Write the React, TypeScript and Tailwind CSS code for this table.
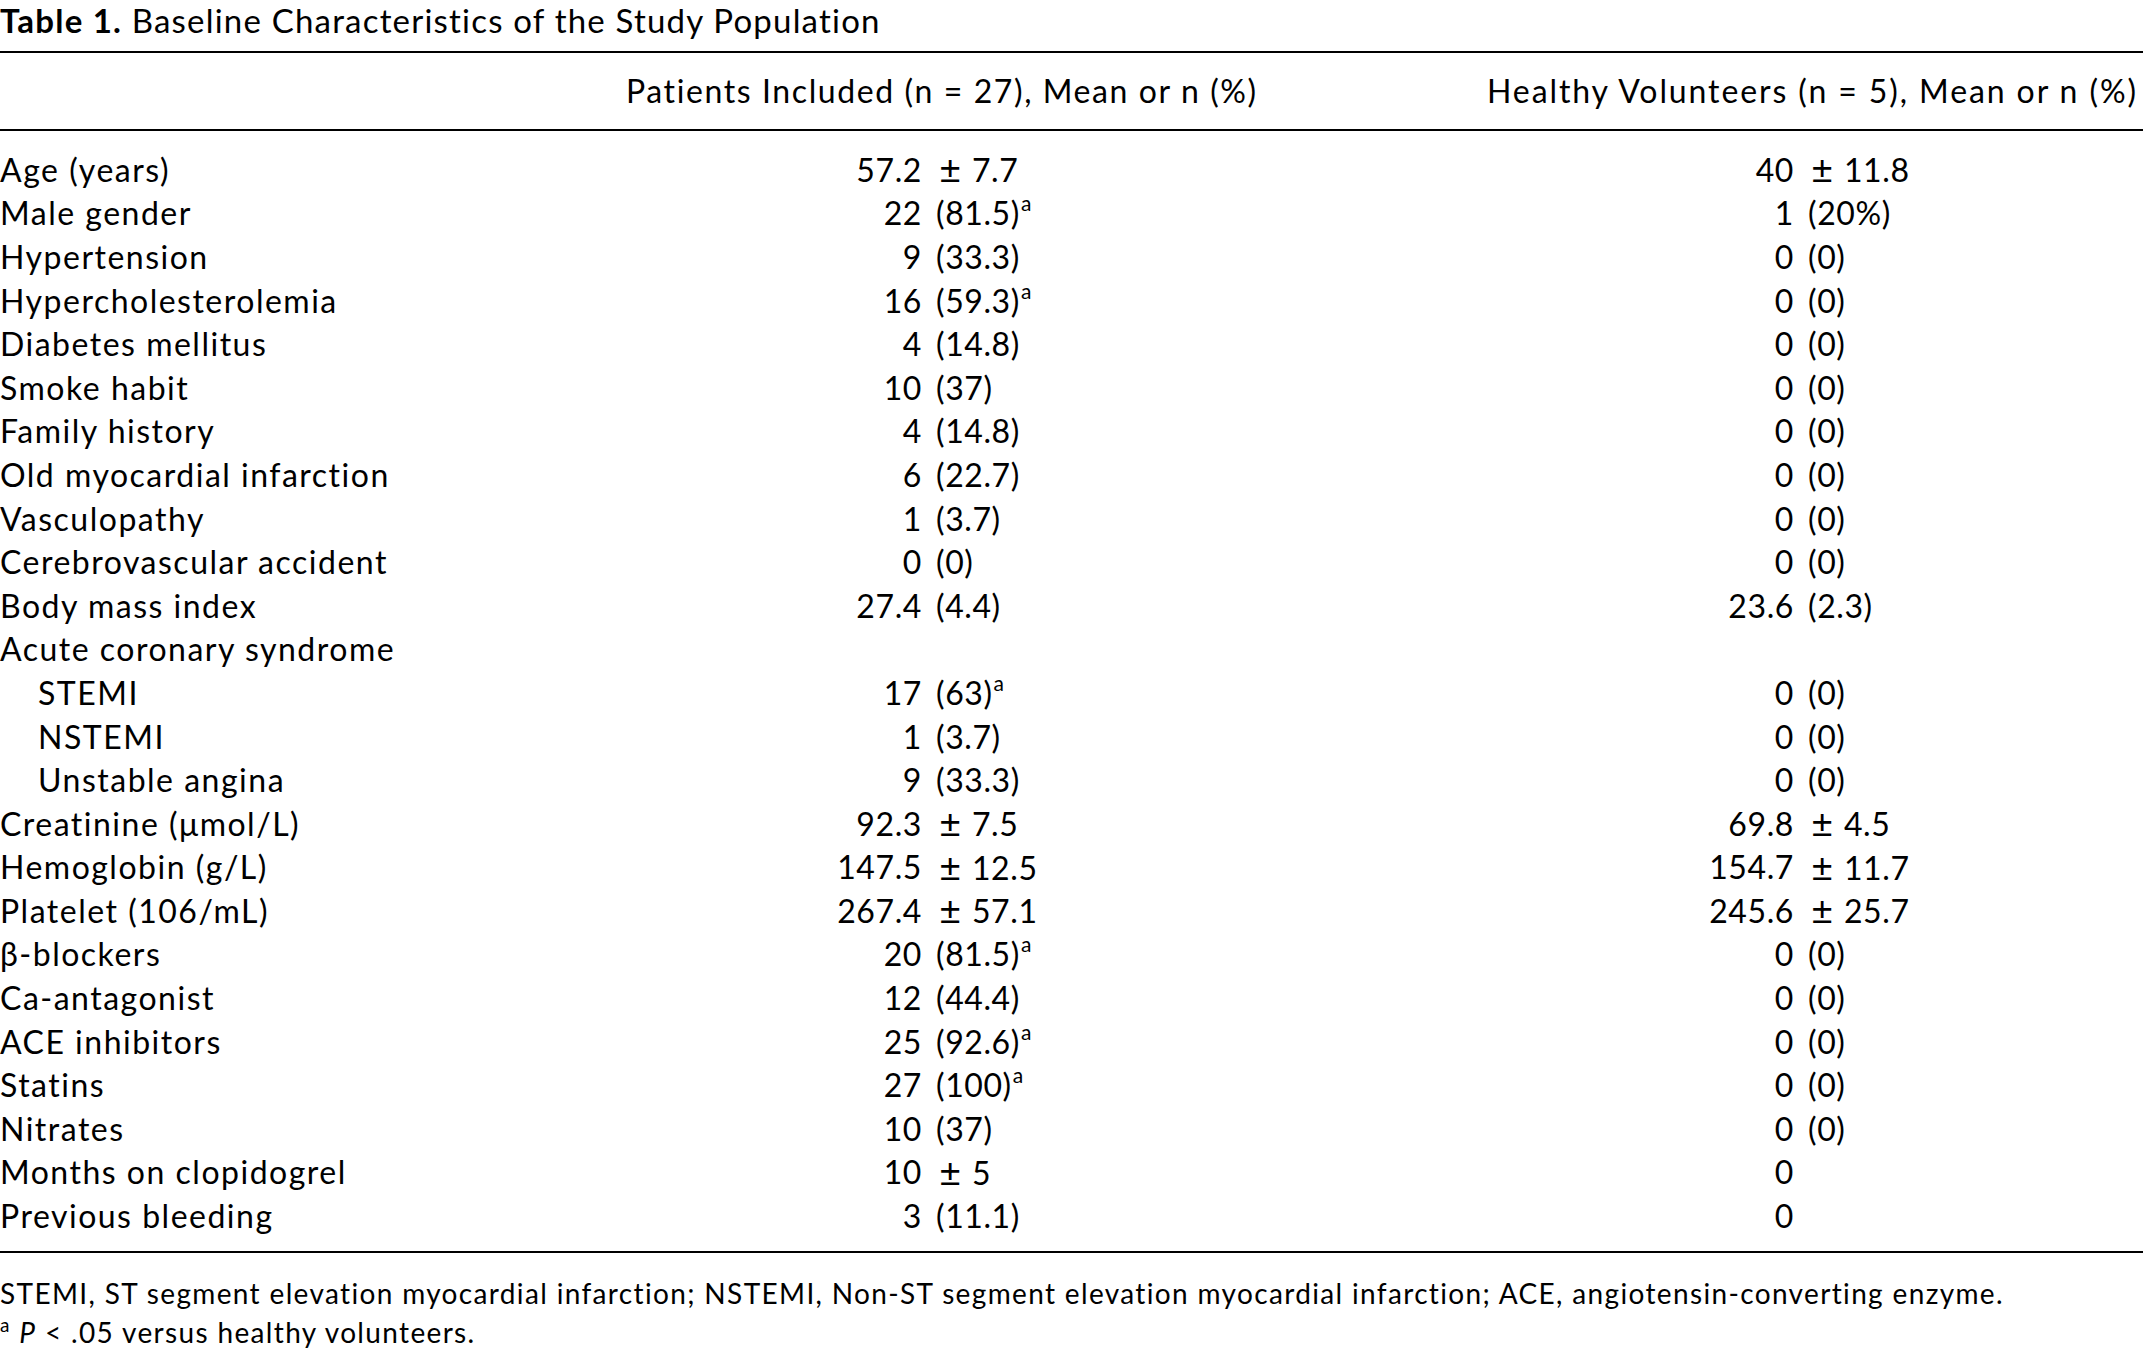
type Cell = { a: string; b?: string; pm?: boolean; sup?: boolean };
type Row = { label: string; indent?: boolean; p?: Cell; h?: Cell };

const zero: Cell = { a: '0', b: '(0)' };

const rows: Row[] = [
  { label: 'Age (years)', p: { a: '57.2', b: '7.7', pm: true }, h: { a: '40', b: '11.8', pm: true } },
  { label: 'Male gender', p: { a: '22', b: '(81.5)', sup: true }, h: { a: '1', b: '(20%)' } },
  { label: 'Hypertension', p: { a: '9', b: '(33.3)' }, h: zero },
  { label: 'Hypercholesterolemia', p: { a: '16', b: '(59.3)', sup: true }, h: zero },
  { label: 'Diabetes mellitus', p: { a: '4', b: '(14.8)' }, h: zero },
  { label: 'Smoke habit', p: { a: '10', b: '(37)' }, h: zero },
  { label: 'Family history', p: { a: '4', b: '(14.8)' }, h: zero },
  { label: 'Old myocardial infarction', p: { a: '6', b: '(22.7)' }, h: zero },
  { label: 'Vasculopathy', p: { a: '1', b: '(3.7)' }, h: zero },
  { label: 'Cerebrovascular accident', p: { a: '0', b: '(0)' }, h: zero },
  { label: 'Body mass index', p: { a: '27.4', b: '(4.4)' }, h: { a: '23.6', b: '(2.3)' } },
  { label: 'Acute coronary syndrome' },
  { label: 'STEMI', indent: true, p: { a: '17', b: '(63)', sup: true }, h: zero },
  { label: 'NSTEMI', indent: true, p: { a: '1', b: '(3.7)' }, h: zero },
  { label: 'Unstable angina', indent: true, p: { a: '9', b: '(33.3)' }, h: zero },
  { label: 'Creatinine (μmol/L)', p: { a: '92.3', b: '7.5', pm: true }, h: { a: '69.8', b: '4.5', pm: true } },
  { label: 'Hemoglobin (g/L)', p: { a: '147.5', b: '12.5', pm: true }, h: { a: '154.7', b: '11.7', pm: true } },
  { label: 'Platelet (106/mL)', p: { a: '267.4', b: '57.1', pm: true }, h: { a: '245.6', b: '25.7', pm: true } },
  { label: 'β-blockers', p: { a: '20', b: '(81.5)', sup: true }, h: zero },
  { label: 'Ca-antagonist', p: { a: '12', b: '(44.4)' }, h: zero },
  { label: 'ACE inhibitors', p: { a: '25', b: '(92.6)', sup: true }, h: zero },
  { label: 'Statins', p: { a: '27', b: '(100)', sup: true }, h: zero },
  { label: 'Nitrates', p: { a: '10', b: '(37)' }, h: zero },
  { label: 'Months on clopidogrel', p: { a: '10', b: '5', pm: true }, h: { a: '0' } },
  { label: 'Previous bleeding', p: { a: '3', b: '(11.1)' }, h: { a: '0' } },
];

function Rest({ c }: { c?: Cell }) {
  if (!c || !c.b) return <div />;
  if (c.pm) {
    return (
      <div className="whitespace-nowrap pl-[18px] tracking-[0.6px]">
        <span className="font-['Liberation_Sans',sans-serif] text-[37px]">±</span>
        <span className="pl-[11px]">{c.b}</span>
      </div>
    );
  }
  return (
    <div className="whitespace-nowrap pl-[14px] tracking-[0.6px]">
      {c.b}
      {c.sup && <span className="relative -top-[14px] ml-[1px] text-[21px]">a</span>}
    </div>
  );
}

export default function App() {
  return (
    <div className="w-[2143px] h-[1350px] bg-white text-black overflow-hidden font-['Lato',sans-serif]">
      <div className="h-[40px] leading-[40px] text-[33px] tracking-[1.2px] whitespace-nowrap">
        <span className="font-bold">Table 1.</span> Baseline Characteristics of the Study Population
      </div>

      <div className="mt-[11px] border-t-2 border-black" />
      <div className="grid grid-cols-[626px_861px_1fr] h-[76px] items-center text-[32px] whitespace-nowrap">
        <div />
        <div className="tracking-[1.6px]">Patients Included (n = 27), Mean or n (%)</div>
        <div className="tracking-[1.9px]">Healthy Volunteers (n = 5), Mean or n (%)</div>
      </div>
      <div className="border-t-2 border-black" />

      <div className="pt-[17px] pb-[13px] text-[32px]">
        {rows.map((r) => (
          <div
            key={r.label}
            className="grid grid-cols-[600px_322px_572px_300px_1fr] h-[43.6px] items-center leading-none"
          >
            <div className={r.indent ? 'pl-[38px] whitespace-nowrap tracking-[1.5px]' : 'whitespace-nowrap tracking-[1.5px]'}>
              {r.label}
            </div>
            <div className="text-right tracking-[0.6px]">{r.p?.a}</div>
            <Rest c={r.p} />
            <div className="text-right tracking-[0.6px]">{r.h?.a}</div>
            <Rest c={r.h} />
          </div>
        ))}
      </div>

      <div className="border-t-2 border-black" />
      <div className="pt-[21px] text-[28px] leading-[39px] tracking-[1.35px] whitespace-nowrap">
        <div>
          STEMI, ST segment elevation myocardial infarction; NSTEMI, Non-ST segment elevation myocardial infarction; ACE,
          angiotensin-converting enzyme.
        </div>
        <div>
          <span className="relative -top-[11px] text-[19px]">a</span> <span className="italic">P</span> &lt; .05 versus
          healthy volunteers.
        </div>
      </div>
    </div>
  );
}
